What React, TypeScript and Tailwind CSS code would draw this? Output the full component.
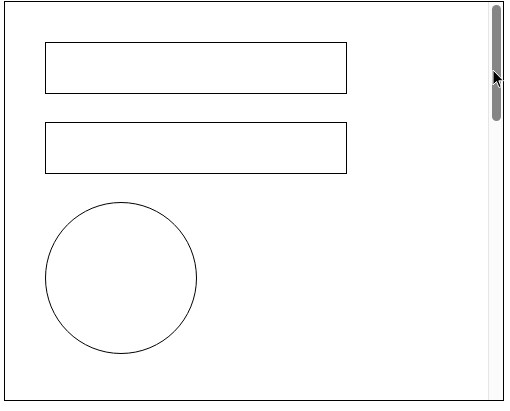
import React from "react";

const Cursor = () => (
  <svg
    width="13"
    height="20"
    viewBox="0 0 13 20"
    className="absolute left-[492px] top-[69px] pointer-events-none"
  >
    <path
      d="M1 1 L1 16 L4.5 12.5 L7 18.5 L9.2 17.6 L6.8 11.8 L11.5 11.8 Z"
      fill="#000"
      stroke="#fff"
      strokeWidth="1"
      strokeLinejoin="round"
    />
  </svg>
);

// the page's scrollbar is hidden in headless mode, so draw it
const ScrollBar = () => (
  <div className="absolute top-0 right-0 bottom-0 w-[15px] bg-[#fbfbfb] border-l border-[#e6e6e6]">
    <div className="ml-[3px] mt-[3px] w-[9px] h-[116px] rounded-full bg-[#858585]" />
  </div>
);

const App = () => {
  return (
    <div className="relative w-[510px] h-[411px] bg-white">
      <div className="ml-[4px] pt-[1px]">
        <div className="relative w-[500px] h-[400px] border border-black">
          <div className="h-full overflow-hidden pr-[15px]">
            <div className="p-[40px] flex flex-col gap-[28px]">
              <div className="w-[302px] h-[52px] border border-black" />
              <div className="w-[302px] h-[52px] border border-black" />
              <div className="w-[152px] h-[152px] rounded-full border border-black" />
            </div>
          </div>
          <ScrollBar />
        </div>
      </div>
      <Cursor />
    </div>
  );
};

export default App;
